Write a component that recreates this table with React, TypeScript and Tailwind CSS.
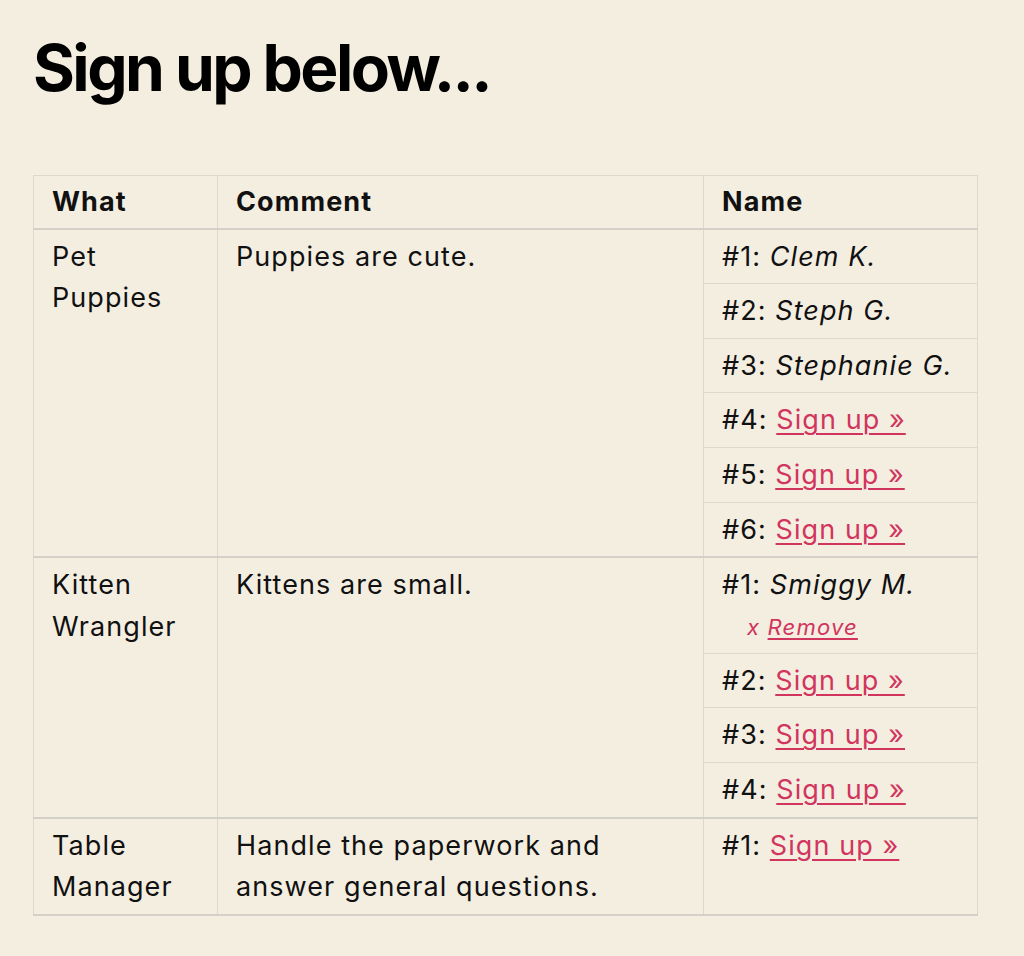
import React from "react";

const LINK = "text-[#d1355d] underline decoration-2 underline-offset-[4px]";

function SignUp({ n }: { n: number }) {
  return (
    <span>
      #{n}: <a href="#" className={LINK}>Sign up »</a>
    </span>
  );
}

function Taken({ n, name }: { n: number; name: string }) {
  return (
    <span>
      #{n}: <em>{name}</em>
    </span>
  );
}

function Slots({ items }: { items: React.ReactNode[] }) {
  return (
    <div className="flex flex-col">
      {items.map((it, i) => (
        <div
          key={i}
          className={
            "px-[18px] py-[6px] " + (i < items.length - 1 ? "border-b border-[#dcd8cd]" : "")
          }
        >
          {it}
        </div>
      ))}
    </div>
  );
}

export default function App() {
  return (
    <div
      className="min-h-[956px] bg-[#f4eee1] text-[#111] pl-[33px] pt-[33px]"
      style={{ fontFamily: "Inter, 'Noto Sans', sans-serif" }}
    >
      <h1 className="text-[64px] leading-[70px] font-bold tracking-[-0.04em] text-black">
        Sign up below...
      </h1>
      <table className="mt-[72px] w-[944px] table-fixed border-collapse text-[27px] leading-[41.6px] tracking-[0.04em] border border-[#dcd8cd]">
        <colgroup>
          <col className="w-[184px]" />
          <col className="w-[486px]" />
          <col className="w-[274px]" />
        </colgroup>
        <thead>
          <tr className="border-b-2 border-[#d3d0c8]">
            <th className="text-left font-bold px-[18px] py-[5px] border-r border-[#dcd8cd]">What</th>
            <th className="text-left font-bold px-[18px] py-[5px] border-r border-[#dcd8cd]">Comment</th>
            <th className="text-left font-bold px-[18px] py-[5px]">Name</th>
          </tr>
        </thead>
        <tbody>
          <tr className="border-b-2 border-[#d3d0c8]">
            <td className="align-top px-[18px] py-[6px] border-r border-[#dcd8cd]">Pet Puppies</td>
            <td className="align-top px-[18px] py-[6px] border-r border-[#dcd8cd]">Puppies are cute.</td>
            <td className="align-top p-0">
              <Slots
                items={[
                  <Taken n={1} name="Clem K." />,
                  <Taken n={2} name="Steph G." />,
                  <Taken n={3} name="Stephanie G." />,
                  <SignUp n={4} />,
                  <SignUp n={5} />,
                  <SignUp n={6} />,
                ]}
              />
            </td>
          </tr>
          <tr className="border-b-2 border-[#d3d0c8]">
            <td className="align-top px-[18px] py-[6px] border-r border-[#dcd8cd]">Kitten Wrangler</td>
            <td className="align-top px-[18px] py-[6px] border-r border-[#dcd8cd]">Kittens are small.</td>
            <td className="align-top p-0">
              <Slots
                items={[
                  <div>
                    <Taken n={1} name="Smiggy M." />
                    <div className="text-[22px] leading-[32px] tracking-[0.054em] pl-[25px] mt-[5px] mb-[4px] italic text-[#d1355d]">
                      x{" "}
                      <a href="#" className="underline decoration-[1.5px] underline-offset-[3px]">
                        Remove
                      </a>
                    </div>
                  </div>,
                  <SignUp n={2} />,
                  <SignUp n={3} />,
                  <SignUp n={4} />,
                ]}
              />
            </td>
          </tr>
          <tr className="border-b-2 border-[#d3d0c8]">
            <td className="align-top px-[18px] py-[6px] border-r border-[#dcd8cd]">Table Manager</td>
            <td className="align-top px-[18px] py-[6px] border-r border-[#dcd8cd]">
              Handle the paperwork and answer general questions.
            </td>
            <td className="align-top p-0">
              <Slots items={[<SignUp n={1} />]} />
            </td>
          </tr>
        </tbody>
      </table>
    </div>
  );
}
